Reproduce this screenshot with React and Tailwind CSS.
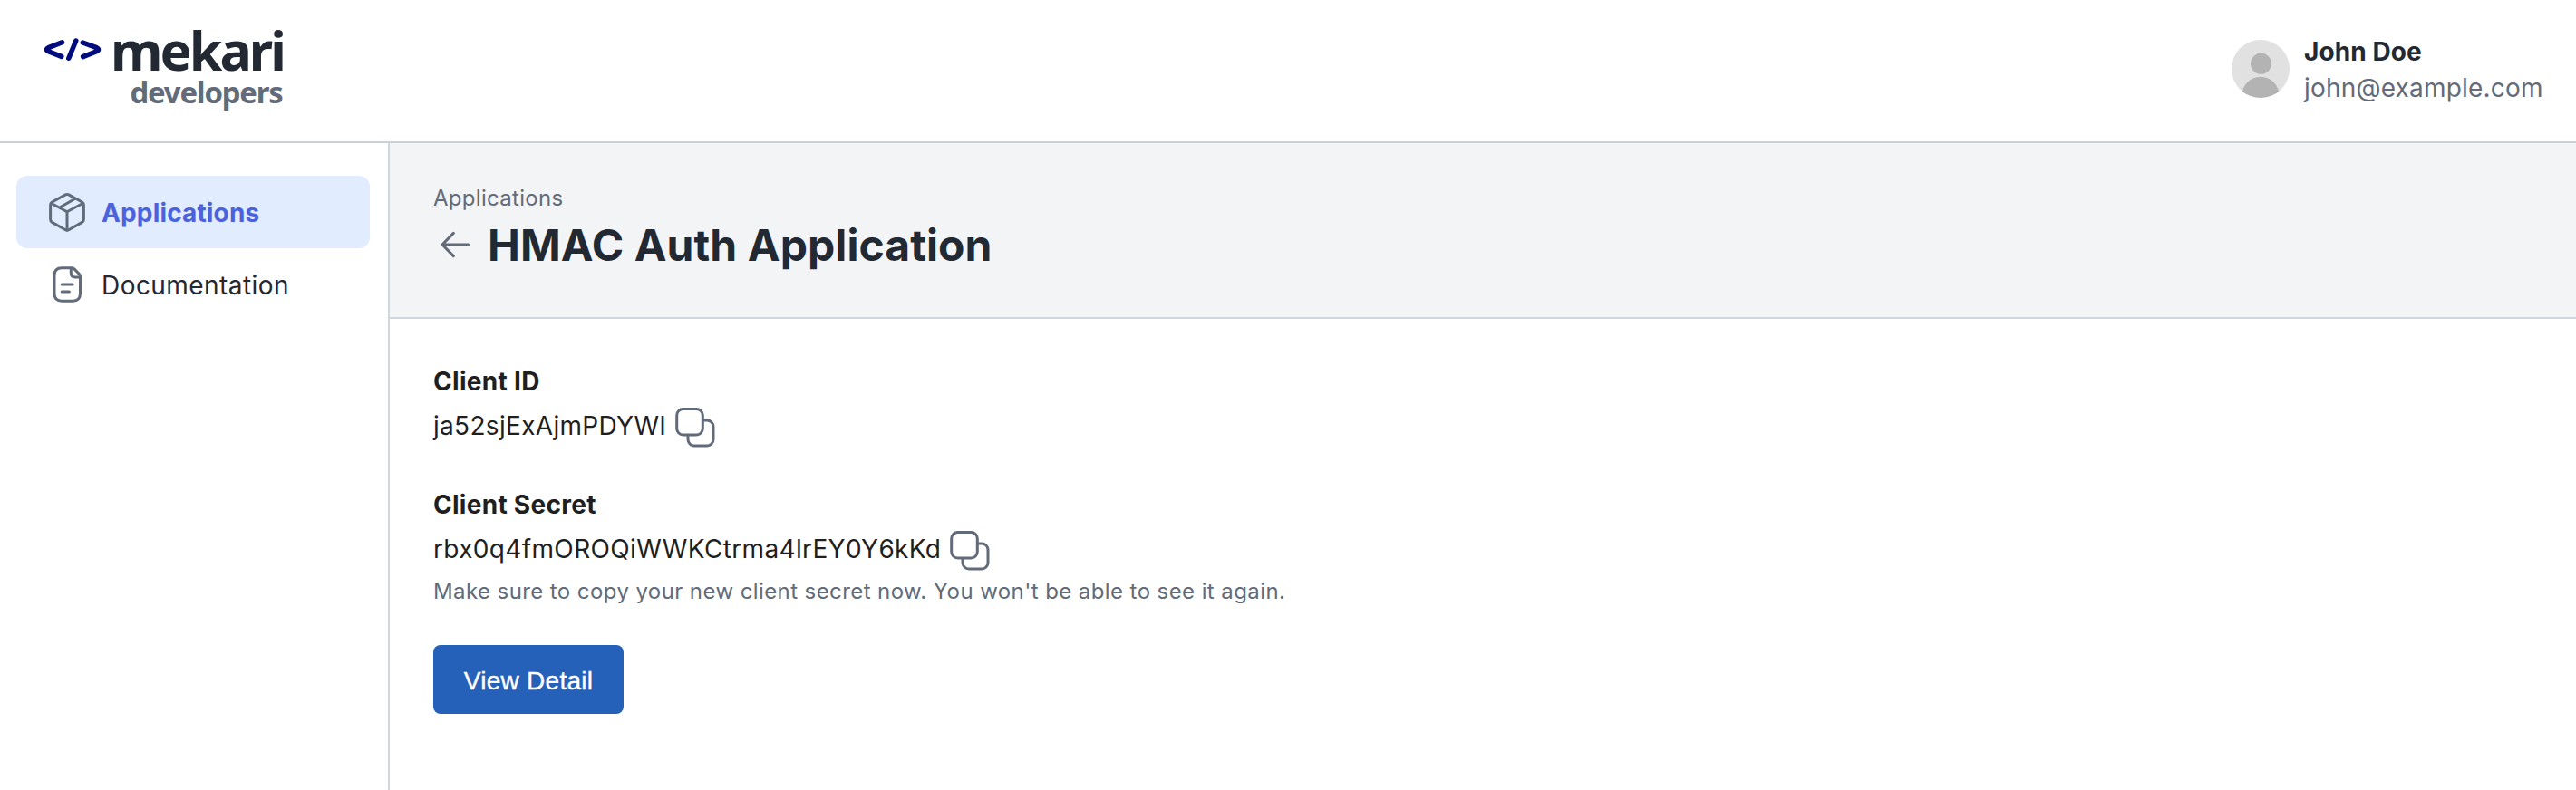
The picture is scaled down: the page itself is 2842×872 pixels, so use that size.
function Logo() {
  return (
    <svg className="h-[156px] w-[340px] shrink-0" viewBox="0 0 340 156" role="img" aria-label="mekari developers">
      <g fill="none" stroke="#000b7d" strokeWidth="5.5" strokeLinecap="round" strokeLinejoin="round">
        <path d="M68.5 46.8 53.5 52.6Q49.5 54.6 53.5 56.8L67.8 62.4" />
        <path d="M83.8 45 75.8 64.2" />
        <path d="M91.3 47 106.5 52.6Q110.5 54.7 106.5 56.8L91.6 62.6" />
      </g>
      <text x="122" y="77.7" textLength="191" lengthAdjust="spacingAndGlyphs" fill="#232933" className="font-['Noto_Sans',sans-serif] text-[60px] font-bold tracking-[-3px]">mekari</text>
      <text x="143.5" y="114" textLength="168" lengthAdjust="spacingAndGlyphs" fill="#626b79" className="font-['Noto_Sans',sans-serif] text-[33px] font-bold tracking-[-1.2px]">developers</text>
    </svg>
  );
}

function Avatar() {
  return (
    <svg className="size-16 shrink-0" viewBox="0 0 64 64">
      <clipPath id="avatar">
        <circle cx="32" cy="32" r="32" />
      </clipPath>
      <g clipPath="url(#avatar)">
        <rect width="64" height="64" fill="#e1e1e1" />
        <circle cx="32.5" cy="26.3" r="11.5" fill="#b3b3b3" />
        <circle cx="32" cy="61.3" r="20.5" fill="#b3b3b3" />
      </g>
    </svg>
  );
}

const stroke = { fill: "none", stroke: "#626b79", strokeWidth: 3, strokeLinecap: "round", strokeLinejoin: "round" };

function BoxIcon() {
  return (
    <svg className="size-12 shrink-0" viewBox="0 0 48 48" {...stroke}>
      <path d="M22.2 4.9Q24 3.9 25.8 4.9L40.5 13Q42.4 14.1 42.4 16.2V32.2Q42.4 34.3 40.5 35.4L25.8 43.8Q24 44.8 22.2 43.8L7.5 35.4Q5.6 34.3 5.6 32.2V16.2Q5.6 14.1 7.5 13Z" />
      <path d="M6.3 14.3 24 23.8 41.7 14.3M24 23.8V44M15.8 19 33 9.3" />
    </svg>
  );
}

function DocIcon() {
  return (
    <svg className="size-12 shrink-0" viewBox="0 0 48 48" {...stroke}>
      <path d="M29 5.7H18.2Q10 5.7 10 13.9V34.1Q10 42.3 18.2 42.3H30.3Q38.5 42.3 38.5 34.1V15.5Q38.5 13.8 37.4 12.6L32.2 7.1Q30.9 5.7 29 5.7Z" />
      <path d="M28.3 6V11.5Q28.3 15.9 32.7 15.9H38.2M18.2 24H30.2M18.2 32H26.4" />
    </svg>
  );
}

function CopyIcon() {
  return (
    <svg className="size-12 shrink-0" viewBox="0 0 48 48" {...stroke}>
      <rect x="3.7" y="3.5" width="28.6" height="28.5" rx="7" />
      <path d="M32.5 15.9H37A7 7 0 0 1 44 22.9V37A7 7 0 0 1 37 44H23A7 7 0 0 1 16 37V32.2" />
    </svg>
  );
}

function BackIcon() {
  return (
    <svg className="size-12 shrink-0" viewBox="0 0 48 48" {...stroke}>
      <path d="M38.6 24H10M22.3 11.4 10 24 22.3 36.600" />
    </svg>
  );
}

export default function App() {
  return (
    <div className="flex h-[872px] w-full flex-col overflow-hidden bg-white font-['Inter','Liberation_Sans',sans-serif] text-[#232933]">
      <header className="flex h-[158px] shrink-0 items-start justify-between border-b-2 border-[#cbd0d8]">
        <Logo />
        <div className="mt-[37px] mr-[36px] flex items-start gap-4">
          <div className="mt-[7px]">
            <Avatar />
          </div>
          <div className="w-[264px] text-[28px] leading-10 whitespace-nowrap">
            <div className="font-bold tracking-[0.1px]">John Doe</div>
            <div className="tracking-[0.2px] text-[#626b79]">john@example.com</div>
          </div>
        </div>
      </header>

      <div className="flex min-h-0 flex-1">
        <aside className="w-[430px] shrink-0 border-r-2 border-[#d0d6dd] pt-9 pr-5 pl-[18px]">
          <nav className="flex flex-col text-[28px]">
            <a className="flex h-20 items-center gap-[14px] rounded-xl bg-[#e1edff] pl-8 font-bold tracking-[0.15px] text-[#4b61dd]">
              <BoxIcon />
              <span className="pt-0.5">Applications</span>
            </a>
            <a className="flex h-20 items-center gap-[14px] pl-8 tracking-[0.44px]">
              <DocIcon />
              <span className="pt-0.5">Documentation</span>
            </a>
          </nav>
        </aside>

        <main className="flex-1">
          <div className="h-[194px] border-b-2 border-[#d0d6dd] bg-[#f3f4f6] pt-[43px] pl-12">
            <div className="text-[24px] leading-9 tracking-[0.3px] text-[#626b79]">Applications</div>
            <div className="flex h-[66px] items-center gap-3">
              <BackIcon />
              <h1 className="pt-0.5 text-[48px] leading-[64px] font-bold tracking-[0.08px]">HMAC Auth Application</h1>
            </div>
          </div>

          <div className="pt-[49px] pl-12 text-[28px] leading-10 text-[#1f1f1f]">
            <div className="font-bold tracking-[0.3px]">Client ID</div>
            <div className="mt-[7px] flex items-start gap-2">
              <span className="pt-0.5 tracking-[0.31px]">ja52sjExAjmPDYWI</span>
              <CopyIcon />
            </div>
            <div className="mt-[41px] font-bold tracking-[0.28px]">Client Secret</div>
            <div className="mt-[7px] flex items-start gap-2">
              <span className="pt-0.5 tracking-[0.35px]">rbx0q4fmOROQiWWKCtrma4lrEY0Y6kKd</span>
              <CopyIcon />
            </div>
            <p className="mt-[3px] text-[24px] leading-9 tracking-[0.408px] text-[#626b79]">
              Make sure to copy your new client secret now. You won't be able to see it again.
            </p>
            <button className="mt-[41px] flex h-[76px] w-[210px] items-center justify-center rounded-lg bg-[#2560b9] pt-[3px] font-['Liberation_Sans',sans-serif] tracking-[0.27px] text-white [-webkit-text-stroke:0.4px_white]">
              View Detail
            </button>
          </div>
        </main>
      </div>
    </div>
  );
}
